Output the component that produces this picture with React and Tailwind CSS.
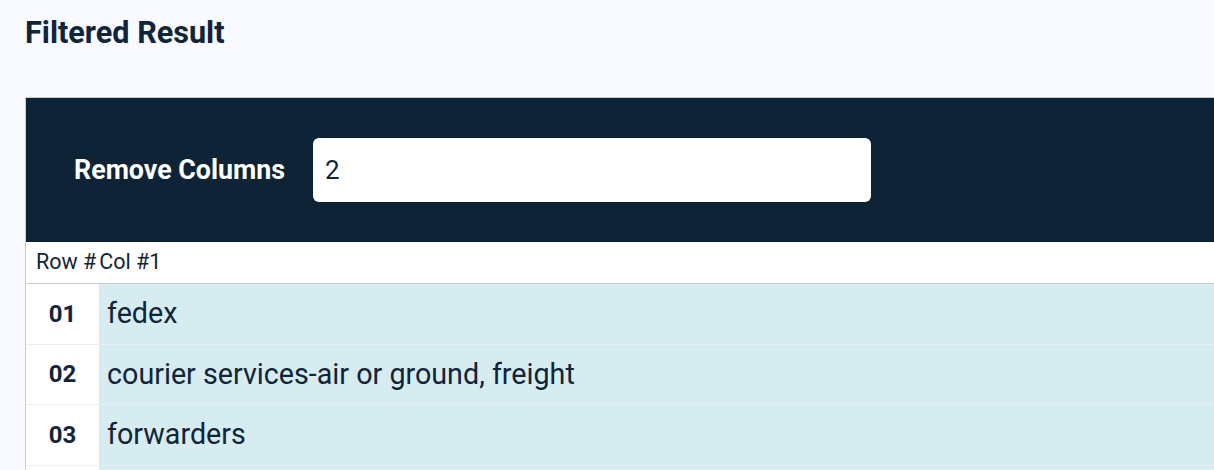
import { useState } from "react";

const rows = [
  { id: "01", value: "fedex" },
  { id: "02", value: "courier services-air or ground, freight" },
  { id: "03", value: "forwarders" },
  { id: "04", value: "" },
];

export default function App() {
  const [removeColumns, setRemoveColumns] = useState("2");

  return (
    <div className="h-[470px] bg-[#f8faff] pl-[25px] pt-[12px] font-['Roboto',sans-serif] text-[#10243a] overflow-hidden">
      <h1 className="text-[30.6px] font-bold leading-[42px] text-[#10243a]">
        Filtered Result
      </h1>
      <div className="mt-[43px] border-l border-t border-[#c8cacd]">
        <div className="bg-[#0e2436] h-[144px] flex items-center pl-[48px]">
          <label className="text-white text-[26.8px] font-bold mr-[28px]">
            Remove Columns
          </label>
          <input
            type="text"
            value={removeColumns}
            onChange={(event) => setRemoveColumns(event.target.value)}
            className="w-[558px] h-[64px] bg-white rounded-md px-3 text-[26px] text-[#10243a] outline-none"
          />
        </div>
        <div className="bg-white h-[42px] flex items-center pl-[10px] text-[21.5px] text-[#10243a] border-b border-[#c8cacd]">
          <span className="mr-[3px]">Row #</span>
          <span>Col #1</span>
        </div>
        {rows.map((row) => (
          <div
            key={row.id}
            className="flex h-[60.5px] border-b border-[#ebeef3]"
          >
            <div className="w-[73px] bg-white flex items-center justify-center text-[24px] font-bold">
              {row.id === "04" ? "" : row.id}
            </div>
            <div className="flex-1 bg-[#d6ecf0] flex items-center pl-[8px] text-[28.7px]">
              {row.value}
            </div>
          </div>
        ))}
      </div>
    </div>
  );
}
